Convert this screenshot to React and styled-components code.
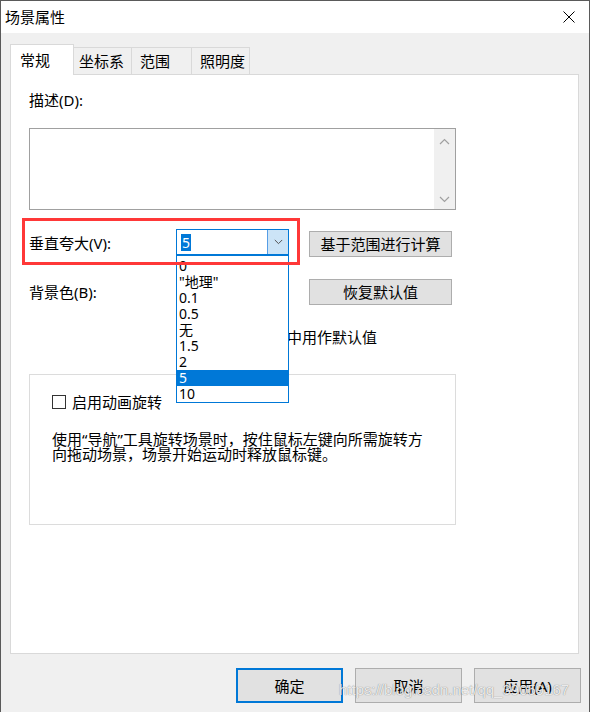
import React from 'react';
import styled, { createGlobalStyle } from 'styled-components';

const GlobalStyle = createGlobalStyle`
  html, body { margin: 0; padding: 0; background: #fff; }
  body { font-family: "Noto Sans", "Noto Sans CJK SC", sans-serif; color: #000; }
  * { box-sizing: border-box; }
`;

const Window = styled.div`
  position: relative;
  width: 590px;
  height: 712px;
  border: 1px solid #5a5a5a;
  border-bottom: none;
  display: flex;
  flex-direction: column;
  background: #f0f0f0;
  overflow: hidden;
  font-family: "Noto Sans", "Noto Sans CJK SC", sans-serif;
  font-size: 15px;
`;

const TitleBar = styled.div`
  height: 32px;
  flex: none;
  background: #fff;
  display: flex;
  align-items: center;
  justify-content: space-between;
  padding: 0 14px 0 4px;
  font-size: 15px;
  line-height: 20px;
`;

const Body = styled.div`
  flex: 1;
  display: flex;
  flex-direction: column;
  padding: 11px 8px 0 9px;
`;

const Tabs = styled.div`
  position: relative;
  z-index: 2;
  display: flex;
  align-items: flex-start;
  height: 30px;
`;

const Tab = styled.div`
  width: ${p => p.$w}px;
  height: ${p => (p.$active ? 31 : 27)}px;
  margin-top: ${p => (p.$active ? 0 : 3)}px;
  margin-left: ${p => (p.$first ? 0 : -1)}px;
  padding-left: ${p => p.$pad}px;
  background: ${p => (p.$active ? '#fff' : '#f0f0f0')};
  border: 1px solid #d9d9d9;
  border-bottom: none;
  display: flex;
  align-items: center;
  font-size: 15px;
  line-height: 20px;
  position: relative;
  z-index: ${p => (p.$active ? 2 : 1)};
`;

const Panel = styled.div`
  width: 569px;
  height: 580px;
  flex: none;
  background: #fff;
  border: 1px solid #d9d9d9;
  padding-left: 18px;
  display: flex;
  flex-direction: column;
  align-items: flex-start;
`;

const Label = styled.div`
  font-size: 15px;
  line-height: 20px;
  margin-top: ${p => p.$mt || 0}px;
  white-space: nowrap;
`;

const TextBox = styled.div`
  margin-top: 18px;
  width: 427px;
  height: 82px;
  border: 1px solid #a0a0a0;
  background: #fff;
  display: flex;
  justify-content: flex-end;
`;

const ScrollBar = styled.div`
  width: 21px;
  height: 100%;
  background: #f0f0f0;
  display: flex;
  flex-direction: column;
  justify-content: space-between;
  align-items: center;
  padding: 9px 0 6px;
`;

const Settings = styled.div`
  margin-top: 19px;
  display: grid;
  grid-template-columns: 147px 133px 143px;
  grid-template-rows: 28px 26px 20px;
  row-gap: 22px;
  position: relative;
`;

const Cell = styled.div`
  display: flex;
  align-items: ${p => p.$align || 'center'};
  grid-column: ${p => p.$col || 'auto'};
  position: relative;
`;

const Combo = styled.div`
  position: relative;
  width: 113px;
  height: 26px;
  border: 1px solid #0078d7;
  background: #fff;
  display: flex;
  align-items: center;
  padding-left: 4px;
`;

const SelText = styled.span`
  background: #0078d7;
  color: #fff;
  font-size: 14px;
  line-height: 17px;
  padding: 0 1px;
`;

const ComboButton = styled.div`
  margin-left: auto;
  width: 21px;
  height: 100%;
  background: #cce4f7;
  border-left: 1px solid #569de5;
  display: flex;
  align-items: center;
  justify-content: center;
`;

const DropList = styled.div`
  position: absolute;
  z-index: 5;
  left: -1px;
  top: 25px;
  width: 113px;
  height: 148px;
  background: #fff;
  border: 1px solid #0078d7;
  padding-top: 2px;
`;

const DropItem = styled.div`
  height: 16px;
  line-height: 16px;
  padding-left: 2px;
  font-size: 14px;
  background: ${p => (p.$sel ? '#0078d7' : 'transparent')};
  color: ${p => (p.$sel ? '#fff' : '#000')};
  white-space: nowrap;
`;

const Button = styled.div`
  width: ${p => p.$w}px;
  height: ${p => p.$h}px;
  background: #e1e1e1;
  border: ${p => (p.$default ? '2px solid #0078d7' : '1px solid #adadad')};
  display: flex;
  align-items: center;
  justify-content: center;
  font-size: 15px;
  line-height: 20px;
  margin-top: ${p => p.$mt || 0}px;
  white-space: nowrap;
`;

const CheckBox = styled.span`
  width: 14px;
  height: 14px;
  flex: none;
  border: 1px solid #333;
  background: #fff;
  margin-right: ${p => p.$mr}px;
  margin-left: ${p => p.$ml || 0}px;
`;

const CheckRow = styled.div`
  display: flex;
  align-items: center;
  font-size: 15px;
  line-height: 20px;
  white-space: nowrap;
`;

const RedMark = styled.div`
  position: absolute;
  z-index: 6;
  left: -7px;
  top: -11px;
  width: 278px;
  height: 47px;
  border: 3px solid #ff3838;
  pointer-events: none;
`;

const Group = styled.div`
  margin-top: 27px;
  width: 427px;
  height: 151px;
  border: 1px solid #dcdcdc;
  padding: 17px 0 0 22px;
`;

const Para = styled.p`
  margin: 20px 0 0;
  font-size: 15px;
  line-height: 15px;
  white-space: nowrap;
`;

const Footer = styled.div`
  margin-top: 14px;
  display: flex;
  justify-content: flex-end;
  gap: 12px;
`;

const Watermark = styled.div`
  position: absolute;
  left: 338px;
  top: 680px;
  font-family: "Liberation Sans", Arial, sans-serif;
  font-size: 15px;
  line-height: 18px;
  color: rgba(250, 250, 250, 0.9);
  text-shadow: 0 0 1px rgba(0, 0, 0, 0.55);
  pointer-events: none;
  white-space: nowrap;
`;

const Chevron = ({ up, color = '#a0a0a0', w = 11, h = 7 }) => (
  <svg width={w} height={h} viewBox="0 0 11 7">
    <path d={up ? 'M1 6 L5.5 1.5 L10 6' : 'M1 1 L5.5 5.5 L10 1'} fill="none" stroke={color} strokeWidth="1.2" />
  </svg>
);

const items = ['0', '"地理"', '0.1', '0.5', '无', '1.5', '2', '5', '10'];

export default function App() {
  return (
    <>
      <GlobalStyle />
      <Window>
        <TitleBar>
          <span>场景属性</span>
          <svg width="12" height="12" viewBox="0 0 12 12">
            <path d="M0.5 0.5 L11.5 11.5 M11.5 0.5 L0.5 11.5" stroke="#000" strokeWidth="1" />
          </svg>
        </TitleBar>
        <Body>
          <Tabs>
            <Tab $active $first $w={64} $pad={9}>常规</Tab>
            <Tab $w={59} $pad={5}>坐标系</Tab>
            <Tab $w={61} $pad={8}>范围</Tab>
            <Tab $w={59} $pad={8}>照明度</Tab>
          </Tabs>
          <Panel>
            <Label $mt={15}>描述(D):</Label>
            <TextBox>
              <ScrollBar>
                <Chevron up />
                <Chevron />
              </ScrollBar>
            </TextBox>
            <Settings>
              <RedMark />
              <Cell>
                <Label>垂直夸大(V):</Label>
              </Cell>
              <Cell $align="flex-start">
                <Combo>
                  <SelText>5</SelText>
                  <ComboButton>
                    <Chevron color="#505050" w={9} h={6} />
                  </ComboButton>
                  <DropList>
                    {items.map(it => (
                      <DropItem key={it} $sel={it === '5'}>{it}</DropItem>
                    ))}
                  </DropList>
                </Combo>
              </Cell>
              <Cell $align="flex-start">
                <Button $w={143} $h={26} $mt={2}>基于范围进行计算</Button>
              </Cell>
              <Cell>
                <Label>背景色(B):</Label>
              </Cell>
              <Cell />
              <Cell>
                <Button $w={143} $h={26}>恢复默认值</Button>
              </Cell>
              <Cell $col="2 / 4">
                <CheckRow>
                  <CheckBox $ml={2} $mr={5} />
                  在所有新文档中用作默认值
                </CheckRow>
              </Cell>
            </Settings>
            <Group>
              <CheckRow>
                <CheckBox $mr={6} />
                启用动画旋转
              </CheckRow>
              <Para>
                使用“导航”工具旋转场景时，按住鼠标左键向所需旋转方
                <br />
                向拖动场景，场景开始运动时释放鼠标键。
              </Para>
            </Group>
          </Panel>
          <Footer>
            <Button $w={107} $h={35} $default>确定</Button>
            <Button $w={107} $h={35}>取消</Button>
            <Button $w={107} $h={35}>应用(A)</Button>
          </Footer>
        </Body>
        <Watermark>https://blog.csdn.net/qq_39059167</Watermark>
      </Window>
    </>
  );
}
